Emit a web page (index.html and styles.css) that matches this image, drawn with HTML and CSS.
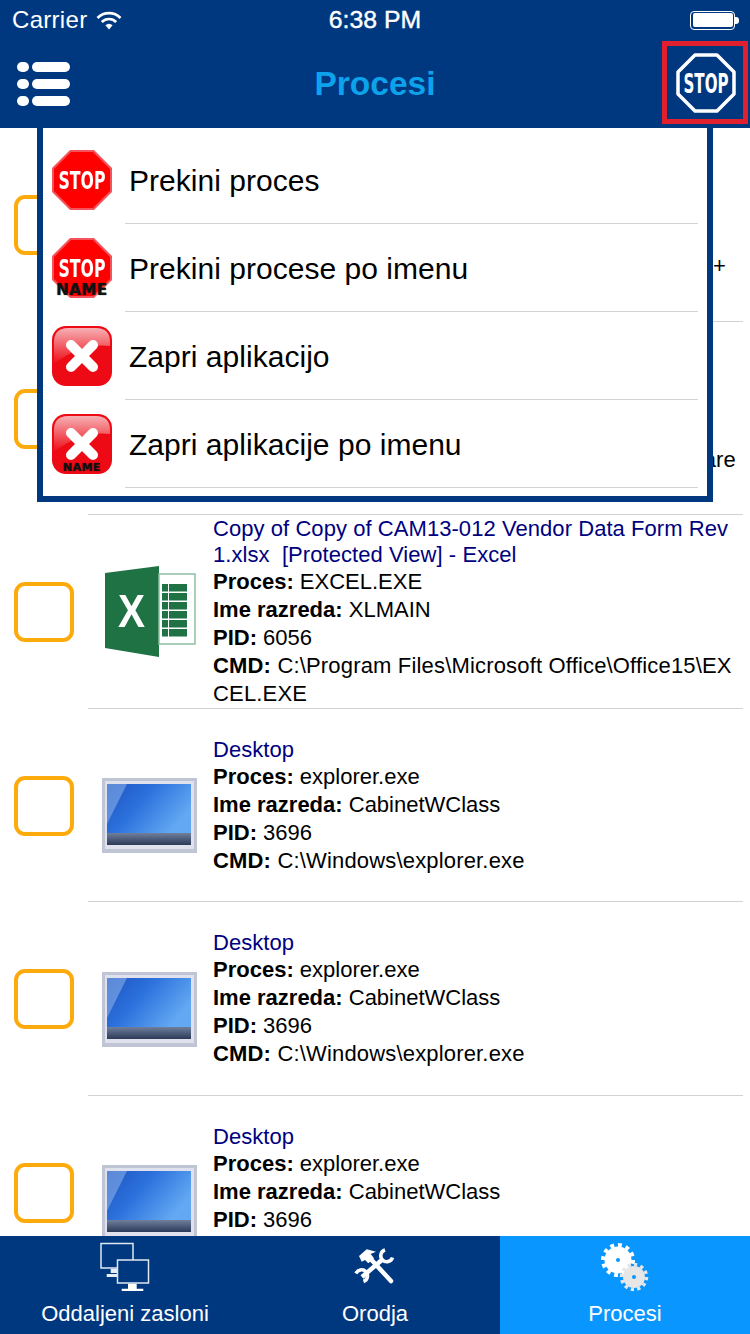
FILE: index.html
```html
<!DOCTYPE html>
<html lang="sl">
<head>
<meta charset="utf-8">
<title>Procesi</title>
<link rel="stylesheet" href="styles.css">
</head>
<body>
<svg class="sprites" aria-hidden="true">
  <defs>
    <linearGradient id="deskBlue" x1="0" y1="0" x2="1" y2="0.5">
      <stop offset="0" stop-color="#1f55c0"/><stop offset="0.45" stop-color="#2b70dc"/><stop offset="1" stop-color="#62a8f2"/>
    </linearGradient>
    <linearGradient id="deskBar" x1="0" y1="0" x2="0" y2="1">
      <stop offset="0" stop-color="#6f7f9c"/><stop offset="1" stop-color="#2c3a58"/>
    </linearGradient>
    <linearGradient id="gloss" x1="0" y1="0" x2="0" y2="1">
      <stop offset="0" stop-color="#f6b0b4"/><stop offset="1" stop-color="#ee0a14"/>
    </linearGradient>
    <filter id="soft" filterUnits="userSpaceOnUse" x="0" y="0" width="60" height="60"><feGaussianBlur stdDeviation="0.7"/></filter>
    <symbol id="desktop" viewBox="0 0 95 75">
      <rect x="0" y="0" width="95" height="75" fill="#c0c5d5"/>
      <rect x="3" y="3" width="89" height="68" fill="#dfe2ec"/>
      <rect x="5" y="6" width="84" height="49" fill="url(#deskBlue)"/>
      <polygon points="5,6 25,6 8,40 5,46" fill="#8fb4ea" opacity="0.55"/>
      <rect x="5" y="55" width="84" height="12" fill="url(#deskBar)"/>
    </symbol>
    <symbol id="stop" viewBox="0 0 60 60">
      <polygon points="18,0 42,0 60,18 60,42 42,60 18,60 0,42 0,18" fill="#f6545c"/>
      <polygon points="19,2 41,2 58,19 58,41 41,58 19,58 2,41 2,19" fill="#ff0000"/>
      <text x="30" y="39" class="stop-word stop-small" textLength="47" lengthAdjust="spacingAndGlyphs">STOP</text>
    </symbol>
    <symbol id="close" viewBox="0 0 60 60">
      <rect width="60" height="60" rx="14" fill="#ee0a14"/>
      <path d="M2 16 Q2 2 16 2 H44 Q58 2 58 16 V20 Q30 16 2 38 Z" fill="url(#gloss)"/>
      <path d="M19 19 L41 41 M41 19 L19 41" stroke="#fff" stroke-width="10" stroke-linecap="round" filter="url(#soft)"/>
    </symbol>
  </defs>
</svg>
<div class="app">
  <header class="top">
    <div class="status">
      <div class="status-left">
        <span>Carrier</span>
        <svg class="wifi" viewBox="0 0 26 19" width="26" height="19"><g fill="none" stroke="#fff" stroke-width="2.6"><path d="M1.5 7 A16 16 0 0 1 24.500 7"/><path d="M5.800 11 A10 10 0 0 1 20.200 11"/></g><path d="M9.400 14.200 A5.500 5.500 0 0 1 16.600 14.200 L13 18.500 Z" fill="#fff"/></svg>
      </div>
      <div class="status-time">6:38 PM</div>
      <div class="status-right">
        <span class="battery"><span class="battery-fill"></span></span><span class="battery-nub"></span>
      </div>
    </div>
    <nav class="nav">
      <div class="nav-left">
        <svg viewBox="0 0 53 44" width="53" height="44" fill="#fff"><rect x="0" y="0" width="12" height="10" rx="5"/><rect x="15" y="0" width="38" height="10" rx="5"/><rect x="0" y="17" width="12" height="10" rx="5"/><rect x="15" y="17" width="38" height="10" rx="5"/><rect x="0" y="34" width="12" height="10" rx="5"/><rect x="15" y="34" width="38" height="10" rx="5"/></svg>
      </div>
      <h1 class="nav-title">Procesi</h1>
      <div class="nav-right">
        <button class="stop-btn" type="button">
          <svg viewBox="0 0 62 62" width="62" height="62"><polygon points="20,3 42,3 59,20 59,42 42,59 20,59 3,42 3,20" fill="none" stroke="#fff" stroke-width="3.500" stroke-linejoin="round"/><text x="31" y="41" class="stop-word" textLength="45" lengthAdjust="spacingAndGlyphs">STOP</text></svg>
        </button>
      </div>
    </nav>
  </header>

  <main class="content">
    <div class="row">
      <span class="check"></span>
      <svg class="row-icon desk"><use href="#desktop"/></svg>
      <div class="info">
        <div class="name">Notepad++</div>
        <div><b>Proces:</b> notepad++.exe</div>
        <div><b>Ime razreda:</b> Notepad++</div>
        <div><b>PID:</b> 4212</div>
        <div class="cmd"><b>CMD:</b> C:\Program Files (x86)\Notepad il\Notepad++<br>\notepad.exe</div>
      </div>
    </div>
    <div class="sep"></div>
    <div class="row">
      <span class="check"></span>
      <svg class="row-icon desk"><use href="#desktop"/></svg>
      <div class="info">
        <div class="name">Corel Reader</div>
        <div><b>Proces:</b> reader.exe</div>
        <div><b>Ime razreda:</b> ReaderWindow</div>
        <div><b>PID:</b> 5120</div>
        <div class="cmd"><b>CMD:</b> C:\Program Files (x86)\Corel\Reader\Software<br>\reader.exe</div>
      </div>
    </div>
    <div class="sep"></div>
    <div class="row">
      <span class="check"></span>
      <svg class="row-icon excel" viewBox="0 0 95 95">
        <polygon points="3,8 57,1 57,92 3,83" fill="#1f7244"/>
        <rect x="57" y="9" width="36" height="70" fill="#fff" stroke="#8dbfa3" stroke-width="1.5"/>
        <g fill="#1f7244"><rect x="60" y="19" width="6" height="7.500"/><rect x="67" y="19" width="18" height="7.500"/><rect x="60" y="28" width="6" height="7.500"/><rect x="67" y="28" width="18" height="7.500"/><rect x="60" y="37" width="6" height="7.500"/><rect x="67" y="37" width="18" height="7.500"/><rect x="60" y="46" width="6" height="7.500"/><rect x="67" y="46" width="18" height="7.500"/><rect x="60" y="55" width="6" height="7.500"/><rect x="67" y="55" width="18" height="7.500"/><rect x="60" y="64" width="6" height="7.500"/><rect x="67" y="64" width="18" height="7.500"/></g>
        <text x="29.500" y="62" class="excel-x" textLength="27" lengthAdjust="spacingAndGlyphs">X</text>
      </svg>
      <div class="info">
        <div class="name">Copy of Copy of CAM13-012 Vendor Data Form Rev 1.xlsx  [Protected View] - Excel</div>
        <div><b>Proces:</b> EXCEL.EXE</div>
        <div><b>Ime razreda:</b> XLMAIN</div>
        <div><b>PID:</b> 6056</div>
        <div class="cmd"><b>CMD:</b> C:\Program Files\Microsoft Office\Office15\EXCEL.EXE</div>
      </div>
    </div>
    <div class="sep"></div>
    <div class="row">
      <span class="check"></span>
      <svg class="row-icon desk"><use href="#desktop"/></svg>
      <div class="info">
        <div class="name">Desktop</div>
        <div><b>Proces:</b> explorer.exe</div>
        <div><b>Ime razreda:</b> CabinetWClass</div>
        <div><b>PID:</b> 3696</div>
        <div class="cmd"><b>CMD:</b> C:\Windows\explorer.exe</div>
      </div>
    </div>
    <div class="sep"></div>
    <div class="row">
      <span class="check"></span>
      <svg class="row-icon desk"><use href="#desktop"/></svg>
      <div class="info">
        <div class="name">Desktop</div>
        <div><b>Proces:</b> explorer.exe</div>
        <div><b>Ime razreda:</b> CabinetWClass</div>
        <div><b>PID:</b> 3696</div>
        <div class="cmd"><b>CMD:</b> C:\Windows\explorer.exe</div>
      </div>
    </div>
    <div class="sep"></div>
    <div class="row">
      <span class="check"></span>
      <svg class="row-icon desk"><use href="#desktop"/></svg>
      <div class="info">
        <div class="name">Desktop</div>
        <div><b>Proces:</b> explorer.exe</div>
        <div><b>Ime razreda:</b> CabinetWClass</div>
        <div><b>PID:</b> 3696</div>
        <div class="cmd"><b>CMD:</b> C:\Windows\explorer.exe</div>
      </div>
    </div>

    <div class="menu">
      <div class="menu-item">
        <svg class="menu-icon"><use href="#stop"/></svg>
        <div class="menu-label">Prekini proces</div>
      </div>
      <div class="menu-item">
        <span class="menu-icon-wrap">
          <svg class="menu-icon"><use href="#stop"/></svg>
          <span class="name-tag name-wide">NAME</span>
        </span>
        <div class="menu-label">Prekini procese po imenu</div>
      </div>
      <div class="menu-item">
        <svg class="menu-icon"><use href="#close"/></svg>
        <div class="menu-label">Zapri aplikacijo</div>
      </div>
      <div class="menu-item">
        <span class="menu-icon-wrap">
          <svg class="menu-icon"><use href="#close"/></svg>
          <span class="name-tag name-narrow">NAME</span>
        </span>
        <div class="menu-label">Zapri aplikacije po imenu</div>
      </div>
    </div>
  </main>

  <footer class="tabs">
    <div class="tab">
      <svg class="tab-icon" viewBox="0 0 60 50">
        <g fill="none" stroke="#dfe8f2" stroke-width="1.5">
          <rect x="6" y="1.500" width="32" height="24.500"/>
          <rect x="22.500" y="18" width="31" height="23" fill="#00387f"/>
        </g>
        <path d="M15.700 26.700 H22 V31 H15.700 Z M11.700 32 H22 V35 H11.700 Z" fill="#e8eef6"/>
        <path d="M33 41.700 H41.700 V46.700 H48.300 V49 H26.700 V46.700 H33 Z" fill="#fff"/>
      </svg>
      <span class="tab-label">Oddaljeni zasloni</span>
    </div>
    <div class="tab">
      <svg class="tab-icon" viewBox="0 0 60 50">
        <path d="M25 16.300 L46 39" stroke="#fff" stroke-width="4.500" stroke-linecap="round" fill="none"/>
        <polygon points="14,14 21.700,7.300 31,9.700 25.700,12 29,16.300 23.300,21.300 20,18 16.700,19.700" fill="#fff"/>
        <g fill="none" stroke="#fff">
          <path d="M38 17 L17 35" stroke-width="4.500"/>
          <path d="M40 8 A6 6 0 1 0 47.500 15.500" stroke-width="3.500"/>
          <path d="M11 31.500 A6 6 0 1 1 18.500 39.500" stroke-width="3.500"/>
        </g>
      </svg>
      <span class="tab-label">Orodja</span>
    </div>
    <div class="tab tab-active">
      <svg class="tab-icon" viewBox="0 0 60 50">
        <circle cx="23" cy="18" r="13.500" fill="#fff"/>
        <circle cx="23" cy="18" r="15" fill="none" stroke="#fff" stroke-width="4" pathLength="24" stroke-dasharray="1 1"/>
        <circle cx="23" cy="18" r="2" fill="#0a96ff"/>
        <circle cx="39" cy="35" r="11" fill="#e6e6e6"/>
        <circle cx="39" cy="35" r="12.500" fill="none" stroke="#e6e6e6" stroke-width="3.500" pathLength="24" stroke-dasharray="1 1"/>
        <circle cx="39" cy="35" r="2" fill="#0a96ff"/>
      </svg>
      <span class="tab-label">Procesi</span>
    </div>
  </footer>
</div>
</body>
</html>
```
FILE: styles.css
```css
* { box-sizing: border-box; }
html, body { margin: 0; padding: 0; background: #fff; }
body { font-family: "Liberation Sans", Arial, sans-serif; color: #000; }
.sprites { position: absolute; width: 0; height: 0; }
.app { width: 750px; height: 1334px; display: flex; flex-direction: column; overflow: hidden; }

.top { background: #00387f; color: #fff; flex: none; }
.status { height: 40px; display: grid; grid-template-columns: 1fr auto 1fr; align-items: center; padding: 0 11px; font-size: 24px; }
.status-left { display: flex; align-items: center; gap: 9px; letter-spacing: 0.3px; padding-left: 1px; }
.wifi { display: block; }
.status-time { font-size: 24.8px; -webkit-text-stroke: 0.4px #fff; }
.status-right { display: flex; justify-content: flex-end; align-items: center; }
.battery { width: 45px; height: 19px; border: 1.5px solid #fff; border-radius: 4px; padding: 1.5px; display: block; }
.battery-fill { display: block; height: 100%; background: #fff; border-radius: 2px; }
.battery-nub { width: 4px; height: 7px; background: #fff; border-radius: 0 3px 3px 0; }

.nav { height: 88px; display: grid; grid-template-columns: 1fr auto 1fr; align-items: center; }
.nav-left { padding: 0 0 0 17px; display: flex; }
.nav-title { margin: 0; font-size: 33.5px; font-weight: 700; color: #0ca3ec; }
.nav-right { display: flex; justify-content: flex-end; padding-right: 2px; }
.stop-btn { width: 86px; height: 83px; border: 5px solid #e1202f; background: transparent; padding: 0 0 0 2px; display: flex; align-items: center; justify-content: center; margin-bottom: 4px; margin-top: 1px; }
.stop-word { font-family: "DejaVu Sans", sans-serif; font-weight: 700; font-size: 26px; fill: #fff; text-anchor: middle; }
.stop-small { font-size: 25px; }

.content { position: relative; flex: 1; min-height: 0; overflow: hidden; }
.row { height: 192.5px; display: flex; align-items: center; padding: 2px 0 0 14px; }
.sep { height: 1px; margin: 0 7px 0 88px; background: #d2d2d0; }
.check { flex: none; width: 60px; height: 60px; border: 4px solid #fdab0c; border-radius: 11px; }
.row-icon { flex: none; width: 95px; margin-left: 28px; filter: blur(0.4px); }
.excel { height: 95px; }
.excel-x { font-family: "Liberation Sans", sans-serif; font-weight: 700; font-size: 46px; fill: #fff; text-anchor: middle; }
.desk { height: 75px; margin-top: 20px; }
.info { margin-left: 16px; width: 525px; flex: none; font-size: 22px; line-height: 28px; }
.name { color: #00007f; line-height: 26px; white-space: pre-wrap; letter-spacing: 0.06px; }
.cmd { word-break: break-all; letter-spacing: 0.17px; }
.info b { font-weight: 700; }

.menu { position: absolute; left: 37px; top: 0; width: 676px; background: #fff; border: 6px solid #00387f; border-top: 0; padding: 8px 9px 8px 9px; }
.menu-item { height: 88px; display: flex; align-items: center; }
.menu-icon { display: block; width: 60px; height: 60px; flex: none; filter: blur(0.3px); }
.menu-icon-wrap { position: relative; display: block; width: 60px; height: 60px; flex: none; }
.name-tag { position: absolute; left: -5px; right: -5px; text-align: center; font-weight: 700; color: #111; font-family: "DejaVu Sans", sans-serif; text-shadow: 0 0 1px #111; }
.name-wide { bottom: 1px; font-size: 15px; line-height: 14px; letter-spacing: 0.6px; }
.name-narrow { bottom: 1px; font-size: 11px; line-height: 11px; letter-spacing: 0.4px; }
.menu-label { flex: 1; height: 88px; margin-left: 13px; padding-left: 4px; border-bottom: 1px solid #d2d2d0; font-size: 30px; line-height: 90px; letter-spacing: 0.03px; }

.tabs { flex: none; height: 98px; display: grid; grid-template-columns: repeat(3, 1fr); background: #00387f; color: #fff; }
.tab { display: flex; flex-direction: column; align-items: center; padding-top: 6px; }
.tab-active { background: #0a96ff; }
.tab-icon { display: block; width: 60px; height: 50px; }
.tab-label { font-size: 22px; line-height: 26px; margin-top: 9px; }
```
